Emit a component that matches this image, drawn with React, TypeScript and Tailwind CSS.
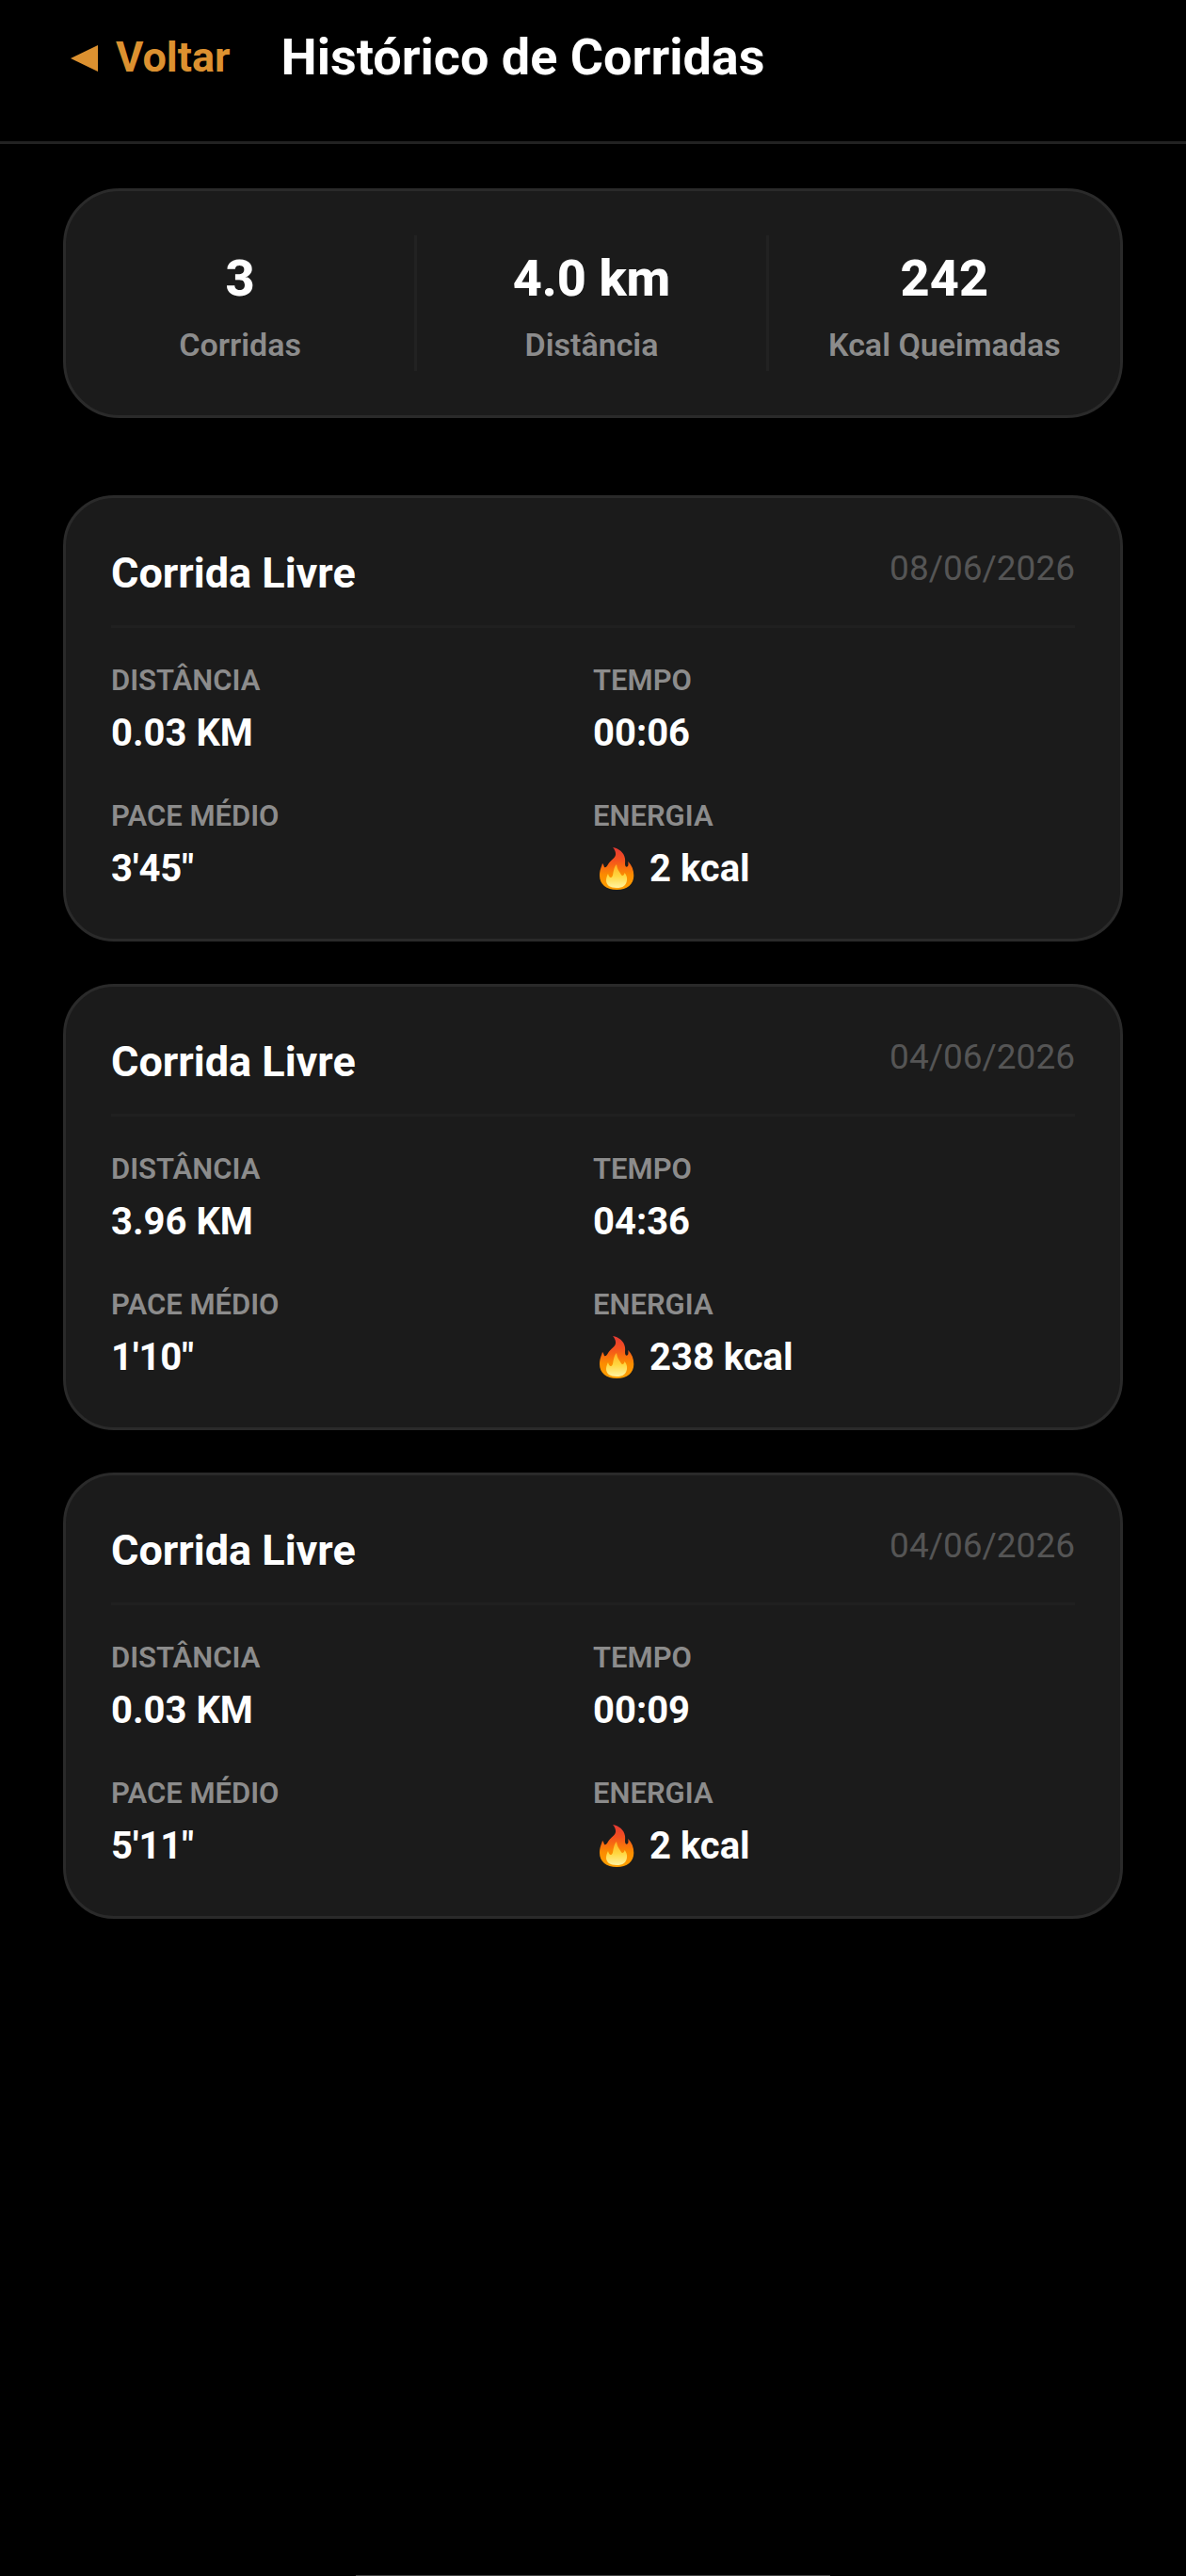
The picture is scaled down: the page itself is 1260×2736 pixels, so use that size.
import React from 'react';

interface Run {
  id: number;
  title: string;
  date: string;
  distance: string;
  time: string;
  pace: string;
  kcal: number;
}

const runs: Run[] = [
  { id: 1, title: 'Corrida Livre', date: '08/06/2026', distance: '0.03 KM', time: '00:06', pace: `3'45"`, kcal: 2 },
  { id: 2, title: 'Corrida Livre', date: '04/06/2026', distance: '3.96 KM', time: '04:36', pace: `1'10"`, kcal: 238 },
  { id: 3, title: 'Corrida Livre', date: '04/06/2026', distance: '0.03 KM', time: '00:09', pace: `5'11"`, kcal: 2 },
];

const totals = [
  { label: 'Corridas', value: '3' },
  { label: 'Distância', value: '4.0 km' },
  { label: 'Kcal Queimadas', value: '242' },
];

const Flame: React.FC = () => (
  <svg viewBox="0 0 50 48" className="w-[50px] h-12 shrink-0" aria-hidden="true">
    <defs>
      <linearGradient id="flame-outer" x1="0" y1="0" x2="0" y2="1">
        <stop offset="0" stopColor="#e53935" />
        <stop offset="0.3" stopColor="#f4511e" />
        <stop offset="0.65" stopColor="#fb8c00" />
        <stop offset="1" stopColor="#ffa000" />
      </linearGradient>
      <linearGradient id="flame-inner" x1="0" y1="0" x2="0" y2="1">
        <stop offset="0" stopColor="#ffb020" />
        <stop offset="0.5" stopColor="#ffd740" />
        <stop offset="1" stopColor="#fff3a0" />
      </linearGradient>
    </defs>
    <path
      fill="url(#flame-outer)"
      d="M21 1c6 1 12 5 13 12 .5 3-.5 6 .5 8 1 1.500 3 .5 3-2l-.2-3c4 4 6 9 6 15 0 9-7 15-18 15S7 40 7 31c0-6 2-9 3-13 1 1 1.500 2 2 4 1.500 1 3-1 4-3 3-5 9-7 8-12-.3-2.500-1.500-4.500-3-6z"
    />
    <path
      fill="url(#flame-inner)"
      d="M25 19c.5 3 1 5 3 8 1.500 2 2 4 3.500 4 1.500-.5 2-2 2-3 2 2 3 5 2.500 8-.8 5.500-4 8-11 8s-11-3-11-8c0-3 1-5 2-7 .5 2 1.500 4 3 4 2.500-.5 2-4 3-7.500.6-3 1.500-5 3-6.500z"
    />
  </svg>
);

const Metric: React.FC<{ label: string; children: React.ReactNode }> = ({ label, children }) => (
  <div>
    <dt className="text-[31px] leading-10 font-semibold text-[#8c8c8c] uppercase">{label}</dt>
    <dd className="mt-3 flex items-center text-[40px] leading-12 font-bold text-white">{children}</dd>
  </div>
);

const RunCard: React.FC<{ run: Run }> = ({ run }) => (
  <article className="bg-[#1b1b1b] border-3 border-[#2a2a2a] rounded-[54px] px-12 py-[50px]">
    <div className="flex justify-between items-start pb-[25px] border-b-3 border-[#202020]">
      <h2 className="text-[45px] leading-15 font-bold text-white">{run.title}</h2>
      <time className="text-[37px] leading-[50px] text-[#555555]">{run.date}</time>
    </div>
    <dl className="grid grid-cols-2 gap-y-11 pt-9">
      <Metric label="Distância">{run.distance}</Metric>
      <Metric label="Tempo">{run.time}</Metric>
      <Metric label="Pace Médio">{run.pace}</Metric>
      <Metric label="Energia">
        <Flame />
        <span className="ml-[10px]">{run.kcal} kcal</span>
      </Metric>
    </dl>
  </article>
);

export default function App() {
  return (
    <div className="min-h-screen flex flex-col bg-black font-['Roboto',sans-serif]">
      <header className="flex items-center pl-[74px] pr-[67px] pt-[29px] pb-[57px] border-b-3 border-[#222222]">
        <button type="button" className="flex items-center gap-[19px] text-[45px] leading-16 font-bold text-[#dc9130]">
          <svg viewBox="0 0 30 30" className="w-[30px] h-[30px]" fill="currentColor" aria-hidden="true">
            <path d="M1 16 30 2v28z" />
          </svg>
          Voltar
        </button>
        <h1 className="ml-[54px] text-[54px] leading-16 font-bold text-white">Histórico de Corridas</h1>
      </header>

      <main className="px-[67px] pt-[47px]">
        <section className="grid grid-cols-3 py-[47px] bg-[#1b1b1b] border-3 border-[#2a2a2a] rounded-[60px]">
          {totals.map(total => (
            <div key={total.label} className="pt-[14px] pb-2 text-center border-r-3 border-[#222222] last:border-r-0">
              <p className="text-[54px] leading-16 font-extrabold text-white">{total.value}</p>
              <p className="mt-[18px] text-[34px] leading-10 font-semibold text-[#8c8c8c]">{total.label}</p>
            </div>
          ))}
        </section>

        <section className="mt-[82px] flex flex-col gap-[45px]">
          {runs.map(run => (
            <RunCard key={run.id} run={run} />
          ))}
        </section>
      </main>

      {/* home indicator */}
      <div className="mt-auto mx-auto w-2/5 h-px bg-[#444444]" />
    </div>
  );
}
